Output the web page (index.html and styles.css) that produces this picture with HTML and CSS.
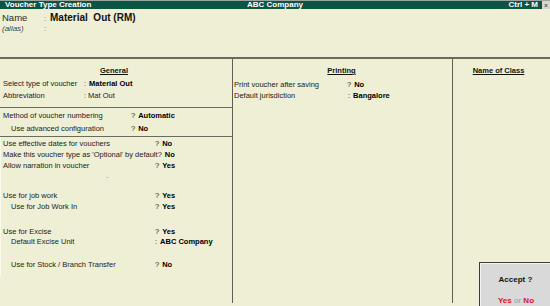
FILE: index.html
```html
<!DOCTYPE html>
<html>
<head>
    <meta charset="UTF-8">
    <title>Voucher Type Creation</title>
    <link rel="stylesheet" href="styles.css">
</head>
<body>
    <div class="screen">
        <div class="titlebar">
            <span class="title-left">Voucher Type Creation</span>
            <span class="title-center">ABC Company</span>
            <span class="title-right">Ctrl + M</span>
            <span class="close-box">x</span>
        </div>

        <div class="header">
            <div class="name-row">
                <span class="name-label">Name</span>
                <span class="name-colon">:</span>
                <span class="name-value">Material&nbsp; Out (RM)</span>
            </div>
            <div class="alias-row">
                <span class="name-label">(alias)</span>
                <span class="name-colon">:</span>
            </div>
        </div>

        <div class="panels">
            <!-- General -->
            <div class="col col-general">
                <div class="col-title"><span>General</span></div>

                <div class="group group-type">
                    <div class="row"><span class="lbl w81">Select type of voucher</span><span class="sep">:</span><b>Material Out</b></div>
                    <div class="row"><span class="lbl w81">Abbreviation</span><span class="sep">:</span><span class="val">Mat Out</span></div>
                </div>

                <div class="group group-numbering">
                    <div class="row"><span class="lbl w128">Method of voucher numbering</span>?<b>Automatic</b></div>
                    <div class="row"><span class="lbl w128 indent">Use advanced configuration</span>?<b>No</b></div>
                </div>

                <div class="group group-options">
                    <div class="row"><span class="lbl w152">Use effective dates for vouchers</span>?<b>No</b></div>
                    <div class="row"><span class="lbl">Make this voucher type as 'Optional' by default</span>?<b>No</b></div>
                    <div class="row"><span class="lbl w152">Allow narration in voucher</span>?<b>Yes</b></div>
                    <div class="row row-mark">-</div>

                    <div class="row gap-8"><span class="lbl w152">Use for job work</span>?<b>Yes</b></div>
                    <div class="row"><span class="lbl w152 indent">Use for Job Work In</span>?<b>Yes</b></div>

                    <div class="row tight gap-15"><span class="lbl w152">Use for Excise</span>?<b>Yes</b></div>
                    <div class="row tight"><span class="lbl w152 indent">Default Excise Unit</span>:<b>ABC Company</b></div>

                    <div class="row gap-12"><span class="lbl w152 indent">Use for Stock / Branch Transfer</span>?<b>No</b></div>
                </div>
            </div>

            <!-- Printing -->
            <div class="col col-printing">
                <div class="col-title"><span>Printing</span></div>
                <div class="group group-print">
                    <div class="row"><span class="lbl w113">Print voucher after saving</span>?<b>No</b></div>
                    <div class="row"><span class="lbl w114">Default jurisdiction</span>:<b>Bangalore</b></div>
                </div>
            </div>

            <!-- Name of Class -->
            <div class="col col-class">
                <div class="col-title"><span>Name of Class</span></div>
            </div>
        </div>

        <div class="accept-box">
            <div class="accept-title">Accept ?</div>
            <div class="accept-choice"><span class="yes">Yes</span> <span class="or">or</span> <span class="no">No</span></div>
        </div>
    </div>
</body>
</html>
```

FILE: styles.css
```css
* {
    margin: 0;
    padding: 0;
    box-sizing: border-box;
}

body {
    width: 550px;
    height: 306px;
    overflow: hidden;
    background-color: #eeefd5;
    font-family: "Liberation Sans", Arial, sans-serif;
    font-size: 7.5px;
    color: #222;
}

.screen {
    position: relative;
    width: 550px;
    height: 306px;
}

/* Title bar */

.titlebar {
    display: flex;
    align-items: center;
    height: 9px;
    background-color: #0e5444;
    border-top: 1px solid #9aa69a;
    color: #fff;
    font-size: 8px;
    font-weight: bold;
    line-height: 8px;
}

.title-left {
    width: 230px;
    padding-left: 5px;
}

.title-center {
    flex: 1;
    padding-left: 17px;
}

.title-right {
    padding-right: 4px;
}

.close-box {
    width: 8px;
    height: 8px;
    background-color: #d6d6d0;
    color: #555;
    font-size: 6px;
    line-height: 8px;
    text-align: center;
    font-weight: bold;
}

/* Name header */

.header {
    height: 48px;
    padding-top: 3px;
}

.name-row,
.alias-row {
    display: flex;
    align-items: baseline;
}

.name-row {
    height: 12px;
    line-height: 12px;
}

.alias-row {
    height: 10px;
    line-height: 10px;
}

.name-label {
    width: 44px;
    padding-left: 2px;
    font-size: 9.5px;
    color: #2a2a2a;
}

.alias-row .name-label {
    font-size: 8px;
    font-style: italic;
    color: #444;
}

.name-colon {
    width: 6px;
    color: #888;
    font-size: 8px;
}

.name-value {
    font-size: 10px;
    font-weight: bold;
    color: #111;
}

/* Panels */

.panels {
    display: grid;
    grid-template-columns: 233px 220px 1fr;
    height: 246px;
    border-top: 2px solid #6a6a5e;
}

.col {
    padding-top: 6px;
}

.col-general,
.col-printing {
    border-right: 1px solid #5e5e52;
}

.col-title {
    height: 11px;
    line-height: 11px;
    text-align: center;
    font-weight: bold;
    color: #111;
}

.col-title span {
    text-decoration: underline;
}

.col-general .col-title {
    padding-right: 4px;
}

.col-printing .col-title {
    padding-right: 2px;
}

.col-class .col-title {
    padding-right: 6px;
}

.row {
    display: flex;
    align-items: baseline;
    height: 11px;
    line-height: 11px;
    white-space: nowrap;
}

.row b {
    color: #000;
    margin-left: 3px;
}

.lbl {
    flex-shrink: 0;
}

.sep {
    color: #444;
}

.val {
    margin-left: 2px;
}

.w81 { width: 81px; }
.w113 { width: 113px; }
.w114 { width: 114px; }
.w128 { width: 128px; }
.w152 { width: 152px; }

.indent {
    padding-left: 8px;
}

.group {
    padding-left: 3px;
}

.group-type {
    margin-top: 2px;
    padding-bottom: 5px;
    border-bottom: 1px solid #6a6a5e;
}

.group-type .row {
    height: 12px;
    line-height: 12px;
}

.group-numbering {
    padding-top: 1px;
    padding-bottom: 1px;
    border-bottom: 1px solid #6a6a5e;
}

.group-numbering .row {
    height: 13px;
    line-height: 13px;
}

.group-options {
    height: 140px;
    padding-top: 1px;
    padding-left: 2px;
    border-left: 1px solid #fbfbec;
}

.row-mark {
    padding-left: 103px;
    color: #999;
}

.tight {
    height: 10px;
    line-height: 10px;
}

.gap-8 { margin-top: 8px; }
.gap-12 { margin-top: 12px; }
.gap-15 { margin-top: 15px; }

.group-print {
    margin-top: 3px;
    padding-left: 1px;
}

/* Accept dialog */

.accept-box {
    position: absolute;
    right: 0;
    bottom: 0;
    width: 71px;
    height: 44px;
    background-color: #d9d9d9;
    border: 1px solid #3c3c3c;
    border-right: none;
    border-bottom: none;
    box-shadow: inset 1px 1px 0 #f4f4f4;
    text-align: center;
    font-size: 8px;
    font-weight: bold;
}

.accept-title {
    margin-top: 12px;
    color: #111;
    line-height: 10px;
    padding-left: 1px;
}

.accept-choice {
    margin-top: 11px;
    line-height: 10px;
    padding-left: 2px;
}

.yes,
.no {
    color: #e0141a;
}

.or {
    color: #9a9a9a;
    font-weight: normal;
}
```
